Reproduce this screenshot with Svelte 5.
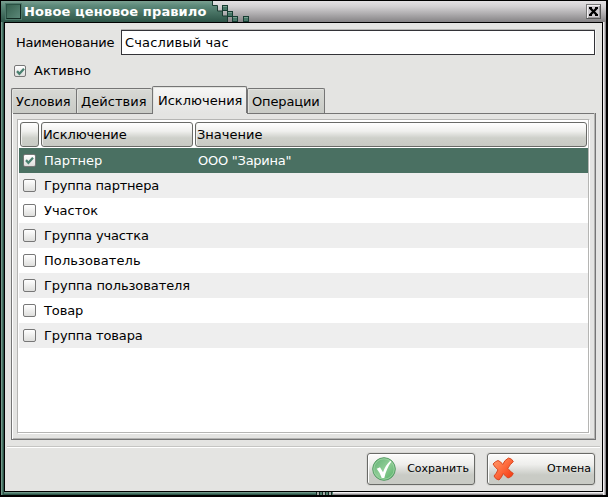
<script>
  const tabs = [
    { label: 'Условия', width: 65, spacing: -0.1 },
    { label: 'Действия', width: 76, spacing: 0.05 },
    { label: 'Исключения', width: 95, spacing: 0, active: true },
    { label: 'Операции', width: 78, spacing: -0.15 }
  ];
  let rows = $state([
    { name: 'Партнер', value: 'ООО "Зарина"', on: true, spacing: 0 },
    { name: 'Группа партнера', spacing: -0.2 },
    { name: 'Участок', spacing: 0 },
    { name: 'Группа участка', spacing: -0.15 },
    { name: 'Пользователь', spacing: 0.08 },
    { name: 'Группа пользователя', spacing: -0.08 },
    { name: 'Товар', spacing: -0.1 },
    { name: 'Группа товара', spacing: -0.13 }
  ]);
  const blocks = [[10, 4], [15, 10], [20, 15], [31, 15]];
</script>

{#snippet check(on)}
  <span class="check">
    {#if on}
      <svg width="11" height="11" viewBox="0 0 11 11"><path d="M2 5.1 4.400 7.700 9 2.800" fill="none" stroke="#4a8070" stroke-width="2.3" /></svg>
    {/if}
  </span>
{/snippet}

<div class="window">
  <header>
    <div class="caption">
      <span class="menu"></span>
      <h1>Новое ценовое правило</h1>
      <svg class="pixels" width="42" height="21" viewBox="0 0 42 21">
        <defs><linearGradient id="cap" x1="0" y1="0" x2="0" y2="1"><stop offset="0" stop-color="#7ba091" /><stop offset=".2" stop-color="#5f8b7c" /><stop offset=".5" stop-color="#4b7667" /><stop offset="1" stop-color="#2d5447" /></linearGradient></defs>
        <path d="M0 0h1v4h4v6h5v5h6v6H0z" fill="url(#cap)" />
        <path d="M.5 0v4.500h5v5.500h5v5h5v6" fill="none" stroke="#1b3b31" />
        {#each blocks as [x, y]}
          <rect {x} {y} width="6" height="6" fill="#173d32" />
          <rect x={x + 1} y={y + 1} width="4" height="4" fill="#477767" />
          <path d="M{x + 1} {y + 1.5}h4" stroke="#7a9e90" />
        {/each}
      </svg>
    </div>
    <button class="close" aria-label="Закрыть">
      <svg width="11" height="11" viewBox="0 0 11 11"><path d="M2.500 2.500l6 6M8.500 2.500l-6 6" stroke="#000" stroke-width="2.4" /><path d="M1 2h3M7 2h3M1 9h3M7 9h3" stroke="#000" stroke-width="2" /></svg>
    </button>
  </header>

  <main>
    <div class="field">
      <span class="label">Наименование</span>
      <div class="input">Счасливый час</div>
    </div>
    <div class="active-row">{@render check(true)}<span>Активно</span></div>

    <div class="tabs">
      {#each tabs as t}
        <div class="tab" class:active={t.active} style="width: {t.width}px; letter-spacing: {t.spacing}px">{t.label}</div>
      {/each}
    </div>
    <div class="page">
      <div class="tree">
        <div class="head">
          <span class="h0"></span><span class="h1">Исключение</span><span class="h2">Значение</span>
        </div>
        {#each rows as r}
          <div class="row" class:selected={r.on}>
            {@render check(r.on)}
            <span class="name" style="letter-spacing: {r.spacing}px">{r.name}</span>
            <span class="value">{r.value ?? ''}</span>
          </div>
        {/each}
      </div>
    </div>

    <hr />
    <div class="buttons">
      <button class="action">
        <svg width="24" height="24" viewBox="0 0 24 24">
          <defs><linearGradient id="ok" x1="0" y1="0" x2="1" y2="1"><stop offset="0" stop-color="#5fae72" /><stop offset=".5" stop-color="#8fcd96" /><stop offset="1" stop-color="#50ae63" /></linearGradient></defs>
          <circle cx="12" cy="12" r="11.3" fill="url(#ok)" stroke="#579b66" />
          <circle cx="12" cy="12" r="10.2" fill="none" stroke="#a0d6a4" stroke-width=".8" />
          <path d="M4.700 11.800 8 10.300 11 15.200C12.800 10.500 15 6.800 18.300 3.800L19.300 4.800C16 9.500 13.800 14.500 12.300 21H9.700Q8 15.500 4.700 11.800z" fill="#fff" />
        </svg>
        <span>Сохранить</span>
      </button>
      <button class="action">
        <svg width="24" height="24" viewBox="0 0 24 24">
          <defs><linearGradient id="no" x1="0" y1="0" x2="1" y2="1"><stop offset="0" stop-color="#ffa070" /><stop offset=".4" stop-color="#ff7445" /><stop offset="1" stop-color="#f4300a" /></linearGradient></defs>
          <path d="M1 7Q3 4.500 6 3.500Q9 4.500 10.700 7.500Q12.500 3 16.500 1Q20 1.500 21.300 4.500Q18 7.500 15.800 11.300Q18 14.500 21.300 16.500Q20 20 16 21Q13.500 19.500 11.300 16.500Q9.500 20.500 7 23Q3.500 22.500 2 19Q4.500 16.500 6 12.800Q3 10.500 1 7z" fill="url(#no)" stroke="#d9461f" stroke-width="1" stroke-linejoin="round" />
        </svg>
        <span>Отмена</span>
      </button>
    </div>
  </main>
  <div class="grip"></div>
</div>

<style>
  :global(body) { background: #000; }
  * { box-sizing: border-box; }
  .window {
    position: relative;
    width: 608px;
    height: 497px;
    padding: 1px 2px 2px 1px;
    background:
      linear-gradient(#000, #000) 0 0 / 1px 100% no-repeat,
      linear-gradient(#000, #000) 0 0 / 100% 1px no-repeat,
      linear-gradient(#000, #000) 606px 0 / 2px 100% no-repeat,
      linear-gradient(#000, #000) 0 495px / 100% 2px no-repeat,
      linear-gradient(90deg, #73998b 1px, #4a7768 1px, #4a7768 2px, #2f5549 2px) 1px 1px / 3px 494px no-repeat,
      linear-gradient(#6d9586 1px, #4a7768 1px, #4a7768 2px, #2f5549 2px) 1px 492px / 316px 3px no-repeat,
      linear-gradient(90deg, #f2f0f2 1px, #c5c3c5 1px, #c5c3c5 2px, #8c8a8c 2px) 603px 1px / 3px 494px no-repeat,
      linear-gradient(#f2f0f2 1px, #c5c3c5 1px, #c5c3c5 2px, #8c8a8c 2px) 333px 492px / 273px 3px no-repeat,
      #000;
    font: 13px/16px "DejaVu Sans", sans-serif;
    color: #000;
    display: flex;
    flex-direction: column;
  }
  header {
    height: 21px;
    display: flex;
    justify-content: space-between;
    background: linear-gradient(#e4e2e4, #d4d2d4 25%, #b0aeb0 60%, #858385);
  }
  .caption {
    display: flex;
    background: linear-gradient(#7ba091, #5f8b7c 20%, #4b7667 50%, #2d5447) 0 0 / 211px 100% no-repeat;
  }
  .menu {
    width: 15px;
    height: 15px;
    margin: 3px 3px 0 5px;
    border: 1px solid;
    border-color: #2a5144 #10271f #10271f #2a5144;
    background: linear-gradient(135deg, #36614f, #5b8878);
    box-shadow: 0 0 0 1px #4d7869;
  }
  h1 {
    width: 188px;
    margin: 0;
    font: bold 13px/21px "DejaVu Sans", sans-serif;
    letter-spacing: 0.12px;
    white-space: nowrap;
    color: #fff;
  }
  .pixels { flex: none; }
  .close {
    width: 15px;
    height: 15px;
    margin: 3px 5px 0 0;
    padding: 0;
    border: 1px solid;
    border-color: #777 #555 #555 #777;
    background: #cecace;
    box-shadow: inset 1px 1px #f2f0f2, inset -1px -1px #9a989a;
    display: grid;
    place-items: center;
  }
  main {
    width: 597px;
    height: 468px;
    margin: 1px 0 0 4px;
    background: #e4e4e2;
    display: flex;
    flex-direction: column;
  }
  .field { display: flex; margin: 7px 0 0 11px; align-items: center; }
  .label { width: 105px; letter-spacing: -0.23px; }
  .input {
    width: 474px;
    height: 25px;
    padding: 4px 3px;
    border: 1px solid #333338;
    background: #fff;
    box-shadow: 0 -1px #b5b5b3, 1px 0 #f5f5f5;
    letter-spacing: 0.14px;
  }
  .active-row { display: flex; align-items: center; gap: 8px; height: 16px; margin: 8px 0 0 9px; }
  .check {
    flex: none;
    width: 12px;
    height: 12px;
    border: 1px solid #777;
    border-radius: 2px;
    background: linear-gradient(#fff, #dededc);
    display: grid;
    place-items: center;
  }
  .row .check { width: 13px; height: 13px; }
  .tabs { display: flex; align-items: flex-end; height: 27px; margin: 7px 0 0 6px; }
  .tab {
    height: 25px;
    padding: 5px 0 0 4px;
    border: 1px solid #757575;
    border-right-width: 0;
    border-bottom: 0;
    border-radius: 2px 2px 0 0;
    background: linear-gradient(#d8d9d5, #c9cbc6);
    box-shadow: inset 1px 1px #e2e3df;
    white-space: nowrap;
  }
  .tab:last-child { border-right-width: 1px; }
  .tab.active {
    height: 27px;
    padding: 6px 0 0 5px;
    border-right-width: 1px;
    background: linear-gradient(#f7f7f6, #e4e4e2);
  }
  .page {
    width: 585px;
    height: 327px;
    margin: 0 0 0 6px;
    padding: 6px 5px 5px;
    border: 1px solid #757575;
    border-top: 0;
    background:
      linear-gradient(#757575, #757575) 0 0 / 141px 1px no-repeat,
      linear-gradient(#757575, #757575) 235px 0 / 350px 1px no-repeat,
      #e4e4e2;
    box-shadow: inset 1px 0 #fff, inset -1px -1px #b4b4b2;
  }
  .tree {
    width: 573px;
    height: 315px;
    padding: 1px;
    border: 1px solid;
    border-color: #b5b5b3 #fff #fff #b5b5b3;
    background: #fff;
    box-shadow: inset -1px -1px #b5b5b3;
  }
  .head { display: flex; gap: 2px; height: 27px; padding: 1px 0 0 1px; }
  .head span {
    height: 25px;
    padding: 4px 1px;
    border: 1px solid #696a67;
    border-radius: 3px;
    background: linear-gradient(#fff, #f0f0ee 35%, #ced0ca 65%, #c8cac4);
    box-shadow: inset 1px 0 #eeeeec;
  }
  .head .h0 { width: 19px; }
  .head .h1 { width: 152px; letter-spacing: -0.1px; }
  .head .h2 { width: 392px; }
  .row { width: 569px; height: 25px; display: flex; align-items: center; padding-left: 4px; }
  .row:nth-child(odd) { background: #eee; }
  .row.selected { background: #4a7062; color: #fff; }
  .name { width: 154px; margin-left: 8px; }
  .value { letter-spacing: -0.25px; }
  hr { width: 593px; height: 2px; margin: 6px 0 0 2px; border: 0; background: linear-gradient(#c5c5c3 50%, #fff 50%); }
  .buttons { display: flex; gap: 12px; margin: 5px 0 0 362px; }
  .action {
    width: 108px;
    height: 32px;
    padding: 0 5px 0 4px;
    border: 1px solid #696a67;
    border-radius: 3px;
    background: linear-gradient(#fcfcfb, #eeeeec 35%, #c9cbc5 70%, #c9cbc5);
    box-shadow: inset 1px 1px #fff, 0 0 0 1px #d8d8d5;
    display: flex;
    align-items: center;
    justify-content: space-between;
    font: 11px/16px "DejaVu Sans", sans-serif;
    color: #000;
  }
  .action:last-child { padding-right: 3px; }
  .grip {
    position: absolute;
    left: 316px;
    top: 492px;
    width: 17px;
    height: 3px;
    background: repeating-linear-gradient(90deg, #152e26 0 1px, #a6aaa7 1px 3px, #152e26 3px 4px, #53806f 4px 6px);
  }
</style>
